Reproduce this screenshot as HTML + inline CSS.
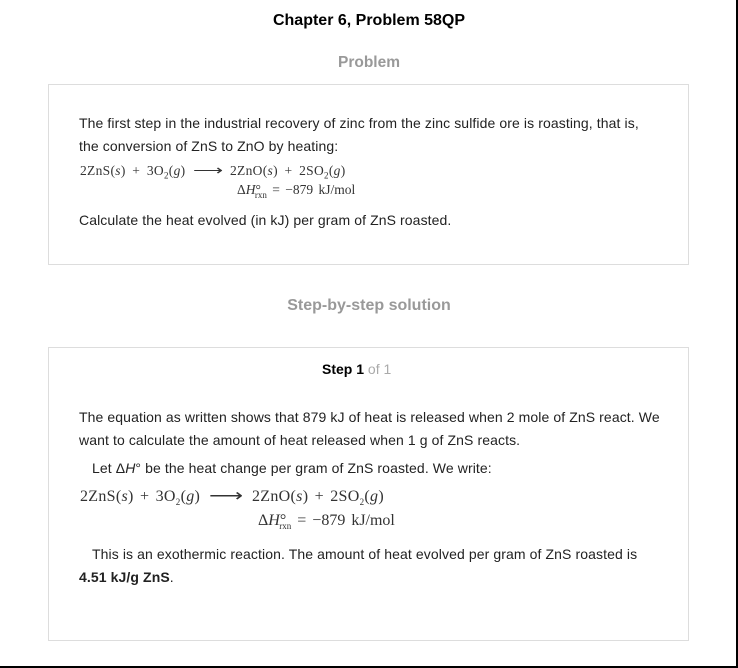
<!DOCTYPE html>
<html><head><style>
body{margin:0;width:738px;height:668px;background:#fff;position:relative;overflow:hidden;font-family:"Liberation Sans",sans-serif;color:#222}
.frame{position:absolute;left:0;top:0;width:736px;height:666px;border-right:2px solid #000;border-bottom:2px solid #000}
.a{position:absolute;white-space:nowrap}
.box{position:absolute;left:48px;width:639px;border:1px solid #ddd}
.t{font-size:14px;color:#222;letter-spacing:0.1px}
.s{font-family:"Liberation Serif",serif;color:#333}
.g{color:#999;font-weight:bold;font-size:16px}
sub{font-size:9px}
</style></head><body>
<div class="frame"></div>
<div class="a" style="left:0;width:738px;text-align:center;top:12px;font-size:16px;font-weight:bold;color:#000">Chapter 6, Problem 58QP</div>
<div class="a g" style="left:0;width:738px;text-align:center;top:54px;font-size:15.5px">Problem</div>
<div class="box" style="top:84px;height:179px"></div>
<div class="a t" style="left:79px;top:115px">The first step in the industrial recovery of zinc from the zinc sulfide ore is roasting, that is,</div>
<div class="a t" style="left:79px;top:138px">the conversion of ZnS to ZnO by heating:</div>
<div class="a s" style="left:80px;top:163px;font-size:13.5px;letter-spacing:0.3px;word-spacing:3px">2ZnS(<i>s</i>) + 3O<sub>2</sub>(<i>g</i>)</div>
<div class="a s" style="left:193px;top:161px;font-size:15px;transform:scaleX(1.4);transform-origin:left">⟶</div>
<div class="a s" style="left:230px;top:163px;font-size:13.5px;letter-spacing:0.3px;word-spacing:3px">2ZnO(<i>s</i>) + 2SO<sub>2</sub>(<i>g</i>)</div>
<div class="a s" style="left:237px;top:182px;font-size:13.5px;word-spacing:2px">Δ<i>H</i>°<sub style="margin-left:-6px">rxn</sub> = −879 kJ/mol</div>
<div class="a t" style="left:79px;top:212px">Calculate the heat evolved (in kJ) per gram of ZnS roasted.</div>
<div class="a g" style="left:0;width:738px;text-align:center;top:297px">Step-by-step solution</div>
<div class="box" style="top:347px;height:292px"></div>
<div class="a" style="left:322px;top:361px;font-size:14px;color:#000"><b>Step 1</b> <span style="color:#aaa">of 1</span></div>
<div class="a t" style="left:79px;top:409px">The equation as written shows that 879 kJ of heat is released when 2 mole of ZnS react. We</div>
<div class="a t" style="left:79px;top:432px">want to calculate the amount of heat released when 1 g of ZnS reacts.</div>
<div class="a t" style="left:92px;top:460px">Let Δ<i>H</i>° be the heat change per gram of ZnS roasted. We write:</div>
<div class="a s" style="left:80px;top:488px;font-size:16px;letter-spacing:0.3px;word-spacing:2px">2ZnS(<i>s</i>) + 3O<sub>2</sub>(<i>g</i>)</div>
<div class="a s" style="left:209px;top:486px;font-size:17px;transform:scaleX(1.4);transform-origin:left">⟶</div>
<div class="a s" style="left:252px;top:488px;font-size:16px;letter-spacing:0.3px;word-spacing:2px">2ZnO(<i>s</i>) + 2SO<sub>2</sub>(<i>g</i>)</div>
<div class="a s" style="left:258px;top:512px;font-size:16px;word-spacing:2px">Δ<i>H</i>°<sub style="margin-left:-7px">rxn</sub> = −879 kJ/mol</div>
<div class="a t" style="left:92px;top:546px">This is an exothermic reaction. The amount of heat evolved per gram of ZnS roasted is</div>
<div class="a t" style="left:79px;top:569px"><b>4.51 kJ/g ZnS</b>.</div>
</body></html>
